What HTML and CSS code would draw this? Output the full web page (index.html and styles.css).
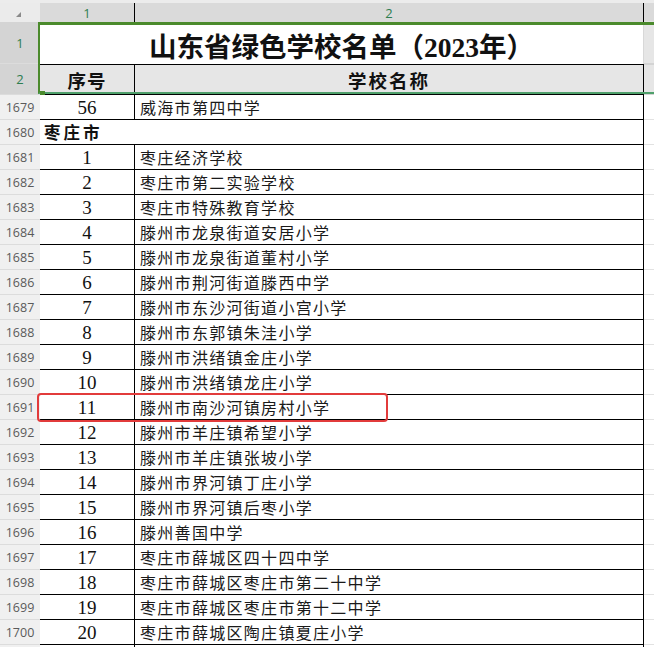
FILE: index.html
```html
<!DOCTYPE html>
<html lang="zh-CN">
<head>
<meta charset="utf-8">
<title>山东省绿色学校名单（2023年）</title>
<link rel="stylesheet" href="styles.css">
</head>
<body>
<div class="app">
  <div class="strip"></div>
  <div class="colhead">
    <div class="corner"><span class="tri"></span></div>
    <div class="ch c1">1</div>
    <div class="ch c2">2</div>
    <div class="ch c3"></div>
  </div>

  <div class="row r-title">
    <div class="rh sel">1</div>
    <div class="cell title">山东省绿色学校名单（2023年）</div>
    <div class="c3 grey"></div>
  </div>
  <div class="row r-head">
    <div class="rh sel">2</div>
    <div class="cell c1 hd">序号</div>
    <div class="cell c2 hd hd-name">学校名称</div>
    <div class="c3 grey"></div>
  </div>

  <div class="row data"><div class="rh">1679</div><div class="cell c1 num">56</div><div class="cell c2 name">威海市第四中学</div><div class="c3"></div></div>
  <div class="row data"><div class="rh">1680</div><div class="cell sec">枣庄市</div><div class="c3"></div></div>
  <div class="row data"><div class="rh">1681</div><div class="cell c1 num">1</div><div class="cell c2 name">枣庄经济学校</div><div class="c3"></div></div>
  <div class="row data"><div class="rh">1682</div><div class="cell c1 num">2</div><div class="cell c2 name">枣庄市第二实验学校</div><div class="c3"></div></div>
  <div class="row data"><div class="rh">1683</div><div class="cell c1 num">3</div><div class="cell c2 name">枣庄市特殊教育学校</div><div class="c3"></div></div>
  <div class="row data"><div class="rh">1684</div><div class="cell c1 num">4</div><div class="cell c2 name">滕州市龙泉街道安居小学</div><div class="c3"></div></div>
  <div class="row data"><div class="rh">1685</div><div class="cell c1 num">5</div><div class="cell c2 name">滕州市龙泉街道董村小学</div><div class="c3"></div></div>
  <div class="row data"><div class="rh">1686</div><div class="cell c1 num">6</div><div class="cell c2 name">滕州市荆河街道滕西中学</div><div class="c3"></div></div>
  <div class="row data"><div class="rh">1687</div><div class="cell c1 num">7</div><div class="cell c2 name">滕州市东沙河街道小宫小学</div><div class="c3"></div></div>
  <div class="row data"><div class="rh">1688</div><div class="cell c1 num">8</div><div class="cell c2 name">滕州市东郭镇朱洼小学</div><div class="c3"></div></div>
  <div class="row data"><div class="rh">1689</div><div class="cell c1 num">9</div><div class="cell c2 name">滕州市洪绪镇金庄小学</div><div class="c3"></div></div>
  <div class="row data"><div class="rh">1690</div><div class="cell c1 num">10</div><div class="cell c2 name">滕州市洪绪镇龙庄小学</div><div class="c3"></div></div>
  <div class="row data"><div class="rh">1691</div><div class="cell c1 num">11</div><div class="cell c2 name">滕州市南沙河镇房村小学</div><div class="c3"></div></div>
  <div class="row data"><div class="rh">1692</div><div class="cell c1 num">12</div><div class="cell c2 name">滕州市羊庄镇希望小学</div><div class="c3"></div></div>
  <div class="row data"><div class="rh">1693</div><div class="cell c1 num">13</div><div class="cell c2 name">滕州市羊庄镇张坡小学</div><div class="c3"></div></div>
  <div class="row data"><div class="rh">1694</div><div class="cell c1 num">14</div><div class="cell c2 name">滕州市界河镇丁庄小学</div><div class="c3"></div></div>
  <div class="row data"><div class="rh">1695</div><div class="cell c1 num">15</div><div class="cell c2 name">滕州市界河镇后枣小学</div><div class="c3"></div></div>
  <div class="row data"><div class="rh">1696</div><div class="cell c1 num">16</div><div class="cell c2 name">滕州善国中学</div><div class="c3"></div></div>
  <div class="row data"><div class="rh">1697</div><div class="cell c1 num">17</div><div class="cell c2 name">枣庄市薛城区四十四中学</div><div class="c3"></div></div>
  <div class="row data"><div class="rh">1698</div><div class="cell c1 num">18</div><div class="cell c2 name">枣庄市薛城区枣庄市第二十中学</div><div class="c3"></div></div>
  <div class="row data"><div class="rh">1699</div><div class="cell c1 num">19</div><div class="cell c2 name">枣庄市薛城区枣庄市第十二中学</div><div class="c3"></div></div>
  <div class="row data"><div class="rh">1700</div><div class="cell c1 num">20</div><div class="cell c2 name">枣庄市薛城区陶庄镇夏庄小学</div><div class="c3"></div></div>
  <div class="row data"><div class="rh"></div><div class="cell c1 num"></div><div class="cell c2 name"></div><div class="c3"></div></div>

  <div class="selection"></div>
  <div class="handle"></div>
  <div class="highlight"></div>
</div>
</body>
</html>
```

FILE: styles.css
```css
* { box-sizing: border-box; }
html, body { margin: 0; padding: 0; background: #fff; }
.app {
  position: relative;
  width: 654px;
  height: 647px;
  overflow: hidden;
  display: flex;
  flex-direction: column;
  font-family: "Liberation Serif", "Noto Sans CJK SC", serif;
  color: #111;
}
.strip { height: 3px; background: #ececec; flex: none; }
.colhead {
  height: 19px;
  flex: none;
  display: flex;
  background: #dadada;
}
.corner {
  width: 40px;
  flex: none;
  background: #ebebeb;
  position: relative;
}
.tri {
  position: absolute;
  left: 16px;
  top: 9px;
  width: 0;
  height: 0;
  border-left: 5px solid transparent;
  border-bottom: 5px solid #8a8a8a;
}
.ch {
  display: flex;
  align-items: center;
  justify-content: center;
  font-family: "Open Sans", "Noto Sans", sans-serif;
  font-size: 13px;
  color: #2e7d4f;
}
.ch.c1 { width: 95px; flex: none; }
.ch.c2 { width: 509px; flex: none; }
.ch.c3 { flex: 1; background: #dadada; }

.row { display: flex; flex: none; }
.rh {
  width: 40px;
  flex: none;
  display: flex;
  align-items: center;
  justify-content: center;
  background: #f0f0f0;
  border-bottom: 1px solid #dcdcdc;
  font-family: "Open Sans", "Noto Sans", sans-serif;
  font-size: 12.5px;
  color: #5a5a5a;
}
.rh.sel {
  background: #d4d4d4;
  color: #2e7d4f;
  font-size: 13px;
}
.cell {
  display: flex;
  align-items: center;
  border-bottom: 1px solid #000;
}
.c1 {
  width: 95px;
  flex: none;
  justify-content: center;
  border-right: 1px solid #000;
}
.c2 {
  width: 509px;
  flex: none;
  border-right: 1px solid #000;
}
.c3 {
  flex: 1;
  border-bottom: 1px solid #e2e2e2;
}
.c3.grey { background: #e6e6e6; border-bottom: 1px solid #d4d4d4; }

/* title row */
.r-title { height: 42px; }
.title {
  width: 604px;
  flex: none;
  justify-content: center;
  border-bottom: none;
  border-right: 1px solid #d8d8d8;
  font-weight: 700;
  font-size: 27.5px;
  padding-top: 4px;
}

/* header row */
.r-head { height: 31px; }
.r-head .cell { border-top: 1px solid #000; background: #e6e6e6; }
.r-head .c3 { border-top: 1px solid #d4d4d4; }
.hd {
  font-weight: 700;
  font-size: 18.5px;
  letter-spacing: 1px;
}
.hd-name { justify-content: center; letter-spacing: 2px; }

/* data rows */
.data { height: 25px; }
.data .rh { height: 25px; }
.num { font-size: 19px; padding-top: 1px; }
.name {
  padding-left: 5px;
  font-family: "Noto Sans CJK SC", sans-serif;
  font-size: 16px;
  letter-spacing: 1.3px;
  font-weight: 400;
  color: #1a1a1a;
}
.sec {
  width: 604px;
  flex: none;
  border-right: 1px solid #000;
  padding-left: 4px;
  font-family: "Noto Sans CJK SC", sans-serif;
  font-weight: 700;
  font-size: 16.5px;
  letter-spacing: 3px;
}

/* overlays */
.selection {
  position: absolute;
  left: 38px;
  top: 22px;
  width: 616px;
  height: 72px;
  border-top: 3px solid #4b8a2c;
  border-left: 2px solid #4b8a2c;
  border-bottom: 2px solid #4fa06b;
  pointer-events: none;
}
.handle {
  position: absolute;
  left: 40px;
  top: 91px;
  width: 5px;
  height: 4px;
  background: #4b8a2c;
}
.highlight {
  position: absolute;
  left: 37px;
  top: 393px;
  width: 351px;
  height: 29px;
  border: 2.5px solid #e23b3b;
  border-radius: 4px;
  pointer-events: none;
}
```
